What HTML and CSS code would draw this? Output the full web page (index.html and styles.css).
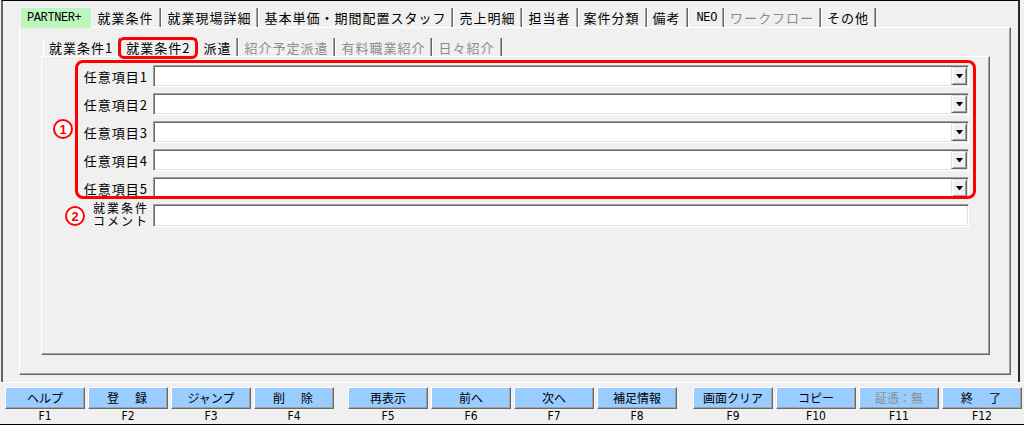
FILE: index.html
```html
<!DOCTYPE html>
<html lang="ja">
<head>
  <meta charset="UTF-8">
  <title>就業条件</title>
  <link rel="stylesheet" href="styles.css">
</head>
<body>

  <div class="frame">
    <nav class="tabs">
      <span class="tab partner">PARTNER+</span>
      <span class="tab active">就業条件</span>
      <span class="tab">就業現場詳細</span>
      <span class="tab">基本単価・期間配置スタッフ</span>
      <span class="tab">売上明細</span>
      <span class="tab">担当者</span>
      <span class="tab">案件分類</span>
      <span class="tab">備考</span>
      <span class="tab ascii">NEO</span>
      <span class="tab off">ワークフロー</span>
      <span class="tab">その他</span>
    </nav>

    <section class="panel">
      <nav class="tabs subtabs">
        <span class="tab">就業条件1</span>
        <span class="tab">就業条件2</span>
        <span class="tab">派遣</span>
        <span class="tab off">紹介予定派遣</span>
        <span class="tab off">有料職業紹介</span>
        <span class="tab off">日々紹介</span>
      </nav>

      <div class="subpanel">
        <div class="form">
          <div class="row">
            <span class="label">任意項目1</span>
            <span class="field select"><span class="drop"></span></span>
          </div>
          <div class="row">
            <span class="label">任意項目2</span>
            <span class="field select"><span class="drop"></span></span>
          </div>
          <div class="row">
            <span class="label">任意項目3</span>
            <span class="field select"><span class="drop"></span></span>
          </div>
          <div class="row">
            <span class="label">任意項目4</span>
            <span class="field select"><span class="drop"></span></span>
          </div>
          <div class="row">
            <span class="label">任意項目5</span>
            <span class="field select"><span class="drop"></span></span>
          </div>
          <div class="row comment">
            <span class="label">就業条件<br>コメント</span>
            <span class="field text"></span>
          </div>
        </div>
      </div>
    </section>
  </div>

  <footer class="fkeys">
    <div class="fgroup">
      <div class="fkey"><button class="fbtn">ヘルプ</button><span class="fname">F1</span></div>
      <div class="fkey"><button class="fbtn wide">登　録</button><span class="fname">F2</span></div>
      <div class="fkey"><button class="fbtn">ジャンプ</button><span class="fname">F3</span></div>
      <div class="fkey"><button class="fbtn wide">削　除</button><span class="fname">F4</span></div>
    </div>
    <div class="fgroup">
      <div class="fkey"><button class="fbtn">再表示</button><span class="fname">F5</span></div>
      <div class="fkey"><button class="fbtn">前へ</button><span class="fname">F6</span></div>
      <div class="fkey"><button class="fbtn">次へ</button><span class="fname">F7</span></div>
      <div class="fkey"><button class="fbtn">補足情報</button><span class="fname">F8</span></div>
    </div>
    <div class="fgroup last">
      <div class="fkey"><button class="fbtn">画面クリア</button><span class="fname">F9</span></div>
      <div class="fkey"><button class="fbtn">コピー</button><span class="fname">F10</span></div>
      <div class="fkey"><button class="fbtn disabled">証憑：無</button><span class="fname">F11</span></div>
      <div class="fkey"><button class="fbtn wide">終　了</button><span class="fname">F12</span></div>
    </div>
  </footer>

  <!-- annotations drawn over the screen -->
  <div class="mark mark-tab"></div>
  <div class="mark mark-items"></div>
  <span class="mark num num1">1</span>
  <span class="mark num num2">2</span>

</body>
</html>
```

FILE: styles.css
```css
* {
  margin: 0;
  padding: 0;
  box-sizing: border-box;
}

body {
  position: relative;
  width: 1024px;
  height: 425px;
  overflow: hidden;
  background: #f0f0f0;
  color: #000;
  font-family: "Noto Sans CJK JP", sans-serif;
  font-size: 13px;
}

.frame {
  height: 382px;
  margin: 0 4px 0 1px;
  border-top: 1px solid #000;
  border-left: 2px solid #646464;
  border-right: 2px solid #2a2a2a;
  padding: 7px 0 0 16px;
}

/* tab strips */
.tabs {
  display: flex;
  height: 19px;
  margin-left: 2px;
}

.tab {
  display: flex;
  align-items: center;
  padding: 0 6px 0 5px;
  border-left: 1px solid #fff;
  border-right: 1px solid #696969;
  box-shadow: inset -1px 0 #a0a0a0;
  letter-spacing: 1px;
  line-height: 1;
  white-space: nowrap;
}

.tab.partner {
  height: 20px;
  padding: 0 10px 0 6px;
  border: none;
  box-shadow: none;
  background: #bdf7bd;
  font-family: "Liberation Mono", "DejaVu Sans Mono", monospace;
  font-size: 12px;
  letter-spacing: -0.4px;
}

.tab.active {
  border-left: none;
  padding: 0 7px 0 6px;
}

.tab.ascii {
  padding: 0 6px 0 8px;
  font-family: "Liberation Mono", "DejaVu Sans Mono", monospace;
  font-size: 12px;
  letter-spacing: -0.4px;
}

.tab.off {
  color: #8c8c8c;
}

.subtabs {
  height: 18px;
}

/* panels */
.panel {
  display: flex;
  flex-direction: column;
  width: 992px;
  height: 348px;
  padding: 10px 20px 19px 21px;
  border-top: 1px solid #fff;
  border-left: 1px solid #fff;
  border-right: 1px solid #696969;
  border-bottom: 1px solid #696969;
  box-shadow: inset -1px -1px #a0a0a0;
}

.subpanel {
  flex: 1;
  padding: 8px 0 0 36px;
  border-top: 1px solid #fff;
  border-left: 1px solid #fff;
  border-right: 1px solid #696969;
  border-bottom: 1px solid #696969;
  box-shadow: inset -1px -1px #a0a0a0;
}

.form {
  display: flex;
  flex-direction: column;
  gap: 6px;
}

.row {
  display: grid;
  grid-template-columns: 70px 816px;
  column-gap: 5px;
  align-items: center;
  height: 22px;
}

.label {
  text-align: right;
  letter-spacing: 1px;
  line-height: 13px;
  white-space: nowrap;
}

.row.comment {
  height: 26px;
  margin-top: -4px;
  align-items: end;
}

.row.comment .label {
  font-size: 12px;
  letter-spacing: 2px;
  margin-right: -1px;
}

.field {
  display: flex;
  justify-content: flex-end;
  height: 22px;
  padding: 1px 1px 1px 0;
  background: #fff;
  border: 1px solid;
  border-color: #a0a0a0 #fff #fff #a0a0a0;
  box-shadow: inset 1px 1px #696969, inset -1px -1px #e3e3e3;
}

.field.text {
  height: 23px;
}

.drop {
  display: flex;
  align-items: center;
  justify-content: center;
  width: 16px;
  height: 18px;
  background: #f0f0f0;
  border-top: 1px solid #e3e3e3;
  border-left: 1px solid #e3e3e3;
  border-right: 1px solid #696969;
  border-bottom: 1px solid #696969;
  box-shadow: inset 1px 1px #fff, inset -1px -1px #a0a0a0;
}

.drop::after {
  content: "";
  width: 1px;
  height: 0;
  border-left: 3px solid transparent;
  border-right: 3px solid transparent;
  border-top: 4px solid #000;
}

/* function keys */
.fkeys {
  display: flex;
  height: 43px;
  padding: 4px 0 0 5px;
  border-top: 1px solid #fff;
  border-bottom: 1px solid #000;
}

.fgroup {
  display: flex;
  gap: 3px;
}

.fgroup + .fgroup {
  margin-left: 14px;
}

.fgroup.last {
  margin-left: 16px;
}

.fkey {
  display: flex;
  flex-direction: column;
  width: 80px;
}

.fbtn {
  height: 22px;
  background: #99ccff;
  border: 1px solid;
  border-color: #fff #696969 #696969 #fff;
  box-shadow: inset -1px -1px #a0a0a0;
  color: #000;
  font-family: "Noto Sans CJK JP", sans-serif;
  font-size: 12px;
  line-height: 1;
  cursor: pointer;
}

.fbtn.wide {
  letter-spacing: 2px;
}

.fbtn.disabled {
  color: #8c8c8c;
}

.fname {
  height: 15px;
  line-height: 15px;
  text-align: center;
  font-family: "DejaVu Sans Condensed", "Liberation Sans Narrow", "DejaVu Sans", sans-serif;
  font-stretch: condensed;
  font-size: 12px;
}

/* red annotations */
.mark {
  position: absolute;
}

.mark-tab {
  left: 118px;
  top: 37px;
  width: 80px;
  height: 22px;
  border: 3px solid #f00;
  border-radius: 6px;
}

.mark-items {
  left: 75px;
  top: 60px;
  width: 901px;
  height: 139px;
  border: 3px solid #f00;
  border-radius: 8px;
}

.num {
  display: flex;
  align-items: center;
  justify-content: center;
  width: 20px;
  height: 20px;
  border: 2px solid #f00;
  border-radius: 50%;
  background: #fff;
  color: #f00;
  font-family: "Liberation Sans", sans-serif;
  font-weight: bold;
  font-size: 13px;
  line-height: 1;
}

.num1 {
  left: 53px;
  top: 119px;
}

.num2 {
  left: 65px;
  top: 206px;
}
```
